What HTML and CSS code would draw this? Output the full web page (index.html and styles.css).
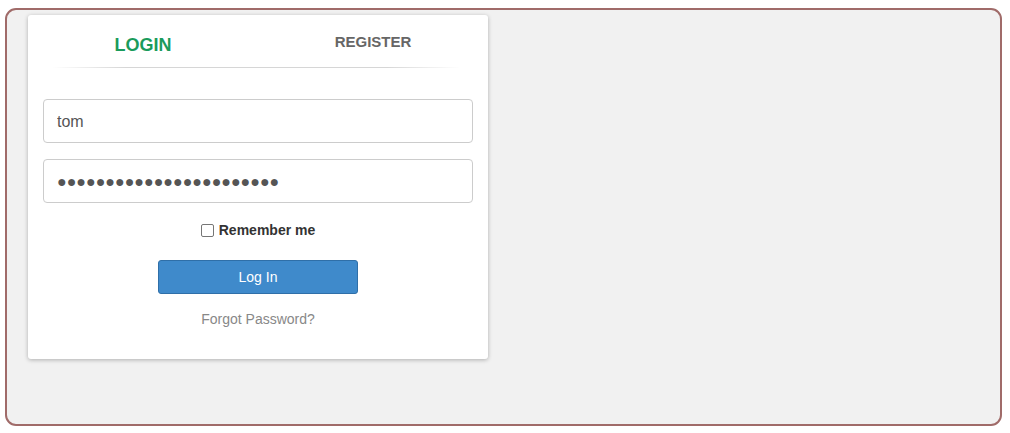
FILE: index.html
```html
<!DOCTYPE html>
<html>
<head>
<meta charset="utf-8">
<link rel="stylesheet" href="styles.css">
</head>
<body>
<div class="frame">
  <div class="card">
    <div class="tabs">
      <div class="tab tab-active">LOGIN</div>
      <div class="tab">REGISTER</div>
    </div>
    <div class="divider"></div>
    <form class="form">
      <input class="field" type="text" value="tom">
      <div class="field field-pass">●●●●●●●●●●●●●●●●●●●●●●●</div>
      <label class="remember"><span class="check"></span><span>Remember me</span></label>
      <button class="btn" type="button">Log In</button>
      <div class="forgot">Forgot Password?</div>
    </form>
  </div>
</div>
</body>
</html>
```

FILE: styles.css
```css
html, body {
  margin: 0;
  padding: 0;
  background: #ffffff;
  font-family: "Liberation Sans", Arial, sans-serif;
}

.frame {
  box-sizing: border-box;
  width: 997px;
  height: 418px;
  margin: 8px 0 0 5px;
  border: 2px solid #a06b69;
  border-radius: 11px;
  background: #f1f1f1;
  padding: 5px 0 0 21px;
}

.card {
  box-sizing: border-box;
  width: 460px;
  height: 344px;
  background: #ffffff;
  border-radius: 3px;
  box-shadow: 0 1px 4px rgba(0, 0, 0, 0.28);
  display: flex;
  flex-direction: column;
}

.tabs {
  display: flex;
  height: 52px;
}

.tab {
  flex: 1;
  text-align: center;
  font-weight: bold;
  color: #666666;
  font-size: 15px;
  line-height: 18px;
  padding-top: 18px;
}

.tab-active {
  color: #1a9b5b;
  font-size: 18px;
  line-height: 20px;
  padding-top: 20px;
}

.divider {
  height: 1px;
  margin: 0 28px 0 24px;
  background: linear-gradient(90deg, rgba(216,216,216,0) 0%, #d6d6d6 18%, #d6d6d6 82%, rgba(216,216,216,0) 100%);
}

.form {
  display: flex;
  flex-direction: column;
  align-items: center;
  padding: 31px 15px 0;
  margin: 0;
}

.field {
  box-sizing: border-box;
  width: 430px;
  height: 44px;
  margin: 0 0 16px;
  padding: 2px 13px 0;
  border: 1px solid #cccccc;
  border-radius: 4px;
  font-family: "Liberation Sans", Arial, sans-serif;
  font-size: 16px;
  color: #555555;
  background: #ffffff;
  outline: none;
}

.field-pass {
  margin-bottom: 0;
  display: flex;
  align-items: center;
  padding-top: 1px;
  line-height: 20px;
  color: #555555;
  letter-spacing: 0;
}

.remember {
  display: flex;
  align-items: center;
  gap: 5px;
  margin-top: 17px;
  height: 20px;
  font-size: 14px;
  font-weight: bold;
  color: #333333;
}

.check {
  box-sizing: border-box;
  width: 13px;
  height: 13px;
  border: 1px solid #767676;
  border-radius: 2px;
  background: #ffffff;
}

.btn {
  box-sizing: border-box;
  width: 200px;
  height: 34px;
  margin-top: 20px;
  border: 1px solid #2f6fa8;
  border-radius: 3px;
  background: #3f8acb;
  color: #ffffff;
  font-family: "Liberation Sans", Arial, sans-serif;
  font-size: 14px;
  padding: 0;
}

.forgot {
  margin-top: 15px;
  font-size: 14px;
  line-height: 20px;
  color: #888888;
}
```
